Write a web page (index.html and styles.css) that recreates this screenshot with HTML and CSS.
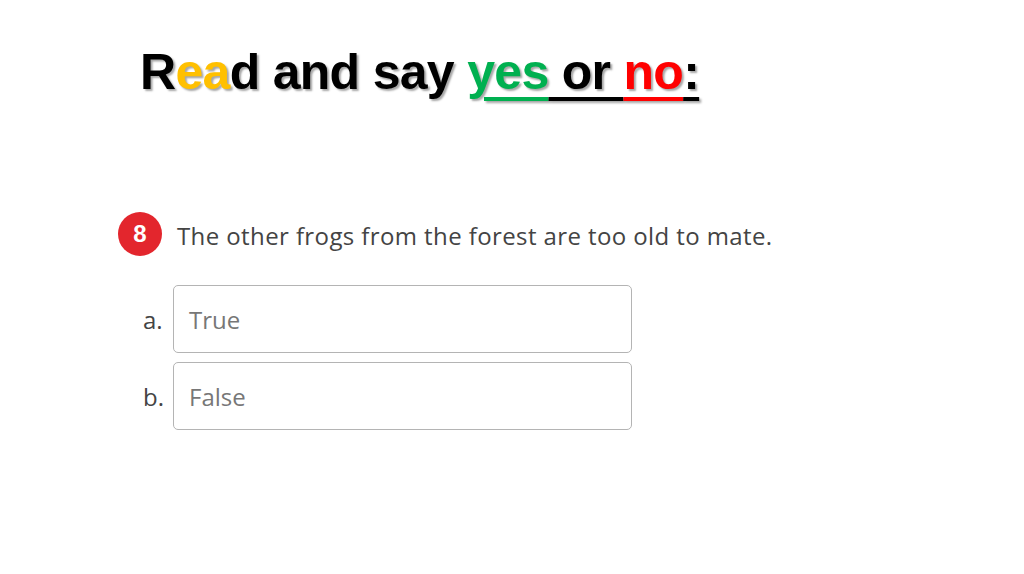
FILE: index.html
```html
<!DOCTYPE html>
<html lang="en">
<head>
<meta charset="utf-8">
<title>Read and say yes or no</title>
<link rel="stylesheet" href="styles.css">
</head>
<body>
<main class="slide">
  <h1 class="title">R<span class="yellow">ea</span>d and say <span class="u green">yes</span><span class="u"> or </span><span class="u red">no</span><span class="u">:</span></h1>
  <section class="quiz">
    <div class="question">
      <span class="badge">8</span>
      <p class="qtext">The other frogs from the forest are too old to mate.</p>
    </div>
    <ol class="options">
      <li class="option"><span class="label">a.</span><div class="box">True</div></li>
      <li class="option"><span class="label">b.</span><div class="box">False</div></li>
    </ol>
  </section>
</main>
</body>
</html>
```
FILE: styles.css
```css
html, body {
  margin: 0;
  padding: 0;
  background: #ffffff;
}
.slide {
  width: 1024px;
  height: 574px;
  display: flex;
  flex-direction: column;
  box-sizing: border-box;
  padding-top: 42px;
}
.title {
  margin: 0 0 0 140px;
  font-family: "Liberation Sans", Arial, sans-serif;
  font-weight: 700;
  font-size: 50px;
  line-height: 60px;
  letter-spacing: -0.7px;
  color: #000;
  text-shadow: 2px 2px 2px rgba(0, 0, 0, 0.35);
}
.yellow { color: #ffc000; }
.green { color: #00b050; }
.red { color: #ff0000; }
.u {
  text-decoration: underline;
  text-decoration-thickness: 4px;
  text-underline-offset: 8px;
}
.quiz {
  margin-top: 110px;
  margin-left: 118px;
  display: flex;
  flex-direction: column;
  font-family: "Open Sans", "Lato", sans-serif;
}
.question {
  display: flex;
  align-items: center;
  gap: 15px;
}
.badge {
  width: 44px;
  height: 44px;
  border-radius: 50%;
  background: #e3262d;
  color: #fff;
  font-family: "Liberation Sans", Arial, sans-serif;
  font-weight: 700;
  font-size: 24px;
  display: flex;
  align-items: center;
  justify-content: center;
  flex: none;
}
.qtext {
  margin: 2px 0 0;
  font-size: 24px;
  color: #444;
  letter-spacing: 0.4px;
}
.options {
  list-style: none;
  margin: 29px 0 0 25px;
  padding: 0;
  display: flex;
  flex-direction: column;
  gap: 9px;
}
.option {
  display: flex;
  align-items: center;
}
.label {
  width: 30px;
  font-size: 24px;
  color: #444;
}
.box {
  width: 459px;
  height: 68px;
  box-sizing: border-box;
  border: 1.5px solid #b4b4b4;
  border-radius: 5px;
  padding-left: 15px;
  display: flex;
  align-items: center;
  font-size: 24px;
  color: #777;
}
```
